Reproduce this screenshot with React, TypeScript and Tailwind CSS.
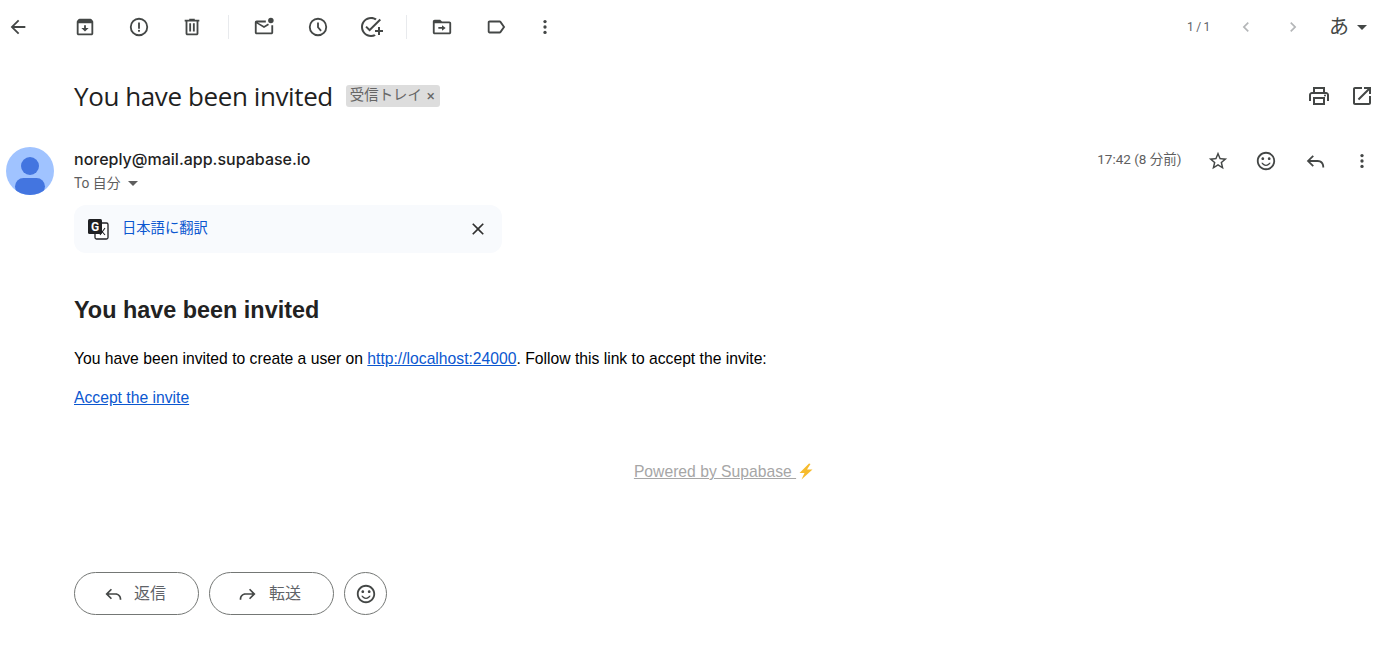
import React from 'react'

const Icon = ({ d, size = 24, className = 'text-[#444746]', children }: { d?: string; size?: number; className?: string; children?: React.ReactNode }) => (
  <svg width={size} height={size} viewBox="0 0 24 24" fill="currentColor" className={className}>
    {d && <path d={d} />}
    {children}
  </svg>
)

const paths = {
  back: 'M20 11H7.83l5.59-5.59L12 4l-8 8 8 8 1.41-1.41L7.83 13H20v-2z',
  archive: 'M20.54 5.23l-1.39-1.68C18.88 3.21 18.47 3 18 3H6c-.47 0-.88.21-1.16.55L3.46 5.23C3.17 5.57 3 6.02 3 6.5V19c0 1.1.9 2 2 2h14c1.1 0 2-.9 2-2V6.5c0-.48-.17-.93-.46-1.27zM5 19V8h14v11H5zm8-9h-2v3H8l4 4 4-4h-3z',
  report: 'M12 2a10 10 0 1 0 0 20 10 10 0 0 0 0-20zm0 18a8 8 0 1 1 0-16 8 8 0 0 1 0 16zM11 7h2v7h-2zm1 8a1.2 1.2 0 1 0 0 2.4 1.2 1.2 0 0 0 0-2.4z',
  trash: 'M15 4V3H9v1H4v2h1v13c0 1.1.9 2 2 2h10c1.1 0 2-.9 2-2V6h1V4h-5zm2 15H7V6h10v13zM9 8h2v9H9zm4 0h2v9h-2z',
  unread: 'M14 5H4c-1.1 0-2 .9-2 2v11c0 1.1.9 2 2 2h16c1.1 0 2-.9 2-2v-8h-2v8H4V8.2l8 5 5.4-3.4-1-1.7-4.4 2.8L5.2 7H14z',
  clock: 'M12 2a10 10 0 1 0 0 20 10 10 0 0 0 0-20zm0 18a8 8 0 1 1 0-16 8 8 0 0 1 0 16zM13 7h-2v5.6l3.6 4.3 1.5-1.3-3.1-3.7z',
  task: 'M22 5.18L10.59 16.6l-4.24-4.24 1.41-1.41 2.83 2.83 10-10L22 5.18zM12 20c-4.41 0-8-3.59-8-8s3.59-8 8-8c1.57 0 3.04.46 4.28 1.25l1.45-1.45C16.1 2.67 14.13 2 12 2 6.48 2 2 6.48 2 12s4.48 10 10 10c1.73 0 3.36-.44 4.78-1.22l-1.5-1.5c-1 .46-2.11.72-3.28.72zm7-5h-3v2h3v3h2v-3h3v-2h-3v-3h-2v3z',
  move: 'M20 6h-8l-2-2H4c-1.1 0-2 .9-2 2v12c0 1.1.9 2 2 2h16c1.1 0 2-.9 2-2V8c0-1.1-.9-2-2-2zm0 12H4V8h16v10zm-8-2l4-3-4-3v2H8v2h4z',
  label: 'M17.63 5.84C17.27 5.33 16.67 5 16 5L5 5.01C3.9 5.01 3 5.9 3 7v10c0 1.1.9 1.99 2 1.99L16 19c.67 0 1.27-.33 1.63-.84L22 12l-4.37-6.16zM16 17H5V7h11l3.55 5L16 17z',
  left: 'M15.41 7.41L14 6l-6 6 6 6 1.41-1.41L10.83 12z',
  right: 'M10 6L8.59 7.41 13.17 12l-4.58 4.59L10 18l6-6z',
  print: 'M19 8h-1V3H6v5H5c-1.66 0-3 1.34-3 3v6h4v4h12v-4h4v-6c0-1.66-1.34-3-3-3zM8 5h8v3H8V5zm8 14H8v-4h8v4zm2-2v-4H6v4H4v-6c0-.55.45-1 1-1h14c.55 0 1 .45 1 1v6h-2zm0-6.5a1 1 0 1 0 0 2 1 1 0 0 0 0-2z',
  open: 'M19 19H5V5h7V3H5c-1.11 0-2 .9-2 2v14c0 1.1.89 2 2 2h14c1.1 0 2-.9 2-2v-7h-2v7zM14 3v2h3.59l-9.83 9.83 1.41 1.41L19 6.41V10h2V3h-7z',
  star: 'M22 9.24l-7.19-.62L12 2 9.19 8.63 2 9.24l5.46 4.73L5.82 21 12 17.27 18.18 21l-1.63-7.03L22 9.24zM12 15.4l-3.76 2.27 1-4.28-3.32-2.88 4.38-.38L12 6.1l1.71 4.04 4.38.38-3.32 2.88 1 4.28L12 15.4z',
  smile: 'M11.99 2C6.47 2 2 6.48 2 12s4.47 10 9.99 10C17.52 22 22 17.52 22 12S17.52 2 11.99 2zM12 20c-4.42 0-8-3.58-8-8s3.58-8 8-8 8 3.58 8 8-3.58 8-8 8zm3.5-9c.83 0 1.5-.67 1.5-1.5S16.33 8 15.5 8 14 8.67 14 9.5s.67 1.5 1.5 1.5zm-7 0c.83 0 1.5-.67 1.5-1.5S9.33 8 8.5 8 7 8.67 7 9.5 7.67 11 8.5 11zM12 16c-1.48 0-2.75-.81-3.45-2H6.88c.8 2.05 2.79 3.5 5.12 3.5s4.32-1.45 5.12-3.5h-1.67c-.7 1.19-1.97 2-3.45 2z',
  close: 'M19 6.41L17.59 5 12 10.59 6.41 5 5 6.41 10.59 12 5 17.59 6.41 19 12 13.41 17.59 19 19 17.59 13.41 12z',
  reply: 'M9.4 5.6L3 12l6.4 6.4 1.4-1.4-4-4H15c2.8 0 5 2.2 5 5v1h2v-1c0-3.9-3.1-7-7-7H6.8l4-4z',
  forward: 'M14.6 5.6L21 12l-6.4 6.4-1.4-1.4 4-4H9c-2.8 0-5 2.2-5 5v1H2v-1c0-3.9 3.1-7 7-7h8.2l-4-4z',
}

const Dots = ({ size = 24 }: { size?: number }) => (
  <Icon size={size}>
    <circle cx="12" cy="5.5" r="2" />
    <circle cx="12" cy="12" r="2" />
    <circle cx="12" cy="18.5" r="2" />
  </Icon>
)

const ToolBtn = ({ children }: { children: React.ReactNode }) => (
  <div className="w-[53.5px] h-10 flex items-center justify-center">{children}</div>
)

const Caret = ({ className = 'border-t-[#444746]' }: { className?: string }) => (
  <span className={`block w-0 h-0 border-x-[5px] border-x-transparent border-t-[5px] ${className}`} />
)

const TranslateIcon = () => (
  <svg width="24" height="24" viewBox="0 0 24 24">
    <rect x="9" y="6" width="13" height="16" rx="1.5" fill="#fff" stroke="#202124" strokeWidth="1.3" />
    <path d="M13 11l6 7M19 11l-5 7" stroke="#202124" strokeWidth="1.1" fill="none" />
    <rect x="2" y="2" width="14" height="15" rx="1.5" fill="#202124" />
    <text x="9" y="14" textAnchor="middle" fontSize="12" fontWeight="700" fill="#fff" fontFamily="Roboto, sans-serif">G</text>
  </svg>
)

const PillBtn = ({ d, label }: { d: string; label: string }) => (
  <button className="w-[125px] h-[43px] rounded-full border border-[#747775] flex items-center justify-center gap-[11px] text-[#5f6368] text-base pr-1">
    <Icon d={d} size={20} />
    <span>{label}</span>
  </button>
)

export default function App() {
  return (
    <div className="w-[1400px] h-[669px] bg-white overflow-hidden antialiased text-[#202124] font-['Roboto','Noto_Sans_CJK_JP',sans-serif]">
      <div className="h-[54px] flex items-center">
        <div className="w-9 flex justify-center">
          <Icon d={paths.back} size={22} />
        </div>
        <div className="ml-[22.5px] flex items-center">
          <ToolBtn><Icon d={paths.archive} size={22} /></ToolBtn>
          <ToolBtn><Icon d={paths.report} size={22} /></ToolBtn>
          <ToolBtn><Icon d={paths.trash} size={22} /></ToolBtn>
          <div className="w-px h-6 bg-[#e8eaed] ml-[8.5px] mr-[9px]" />
          <ToolBtn>
            <Icon d={paths.unread} size={22}><circle cx="19.5" cy="5" r="3" /></Icon>
          </ToolBtn>
          <ToolBtn><Icon d={paths.clock} size={22} /></ToolBtn>
          <ToolBtn><Icon d={paths.task} size={24} /></ToolBtn>
          <div className="w-px h-6 bg-[#e8eaed] ml-[7.5px] mr-[9px]" />
          <ToolBtn><Icon d={paths.move} size={22} /></ToolBtn>
          <ToolBtn><Icon d={paths.label} size={22} /></ToolBtn>
          <div className="w-[44px] flex justify-center"><Dots size={20} /></div>
        </div>
        <div className="ml-auto flex items-center pr-[33px]">
          <span className="text-xs tracking-[-0.3px] text-[#5f6368]">1 / 1</span>
          <div className="ml-[24px] w-6 flex justify-center"><Icon d={paths.left} size={20} className="text-[#b4b6b8]" /></div>
          <div className="ml-[23px] w-6 flex justify-center"><Icon d={paths.right} size={20} className="text-[#b4b6b8]" /></div>
          <span className="ml-[24px] text-[20px] text-[#444746]">あ</span>
          <span className="ml-[8px]"><Caret /></span>
        </div>
      </div>

      <div className="h-[84px] pl-[74px] pr-[26px] flex items-center">
        <h1 className="text-[26px] leading-9 text-[#1f1f1f] font-['Open_Sans',sans-serif] tracking-[-0.4px]">You have been invited</h1>
        <span className="ml-[13px] h-[22px] pl-[4px] pr-[5px] rounded-[3px] bg-[#dddddd] flex items-center text-[14.4px] text-[#666666] gap-[5px]">
          受信トレイ
          <span className="text-[15px] leading-none">×</span>
        </span>
        <div className="ml-auto flex items-center gap-[19px]">
          <Icon d={paths.print} size={24} />
          <Icon d={paths.open} size={24} />
        </div>
      </div>

      <div className="pl-[6px] pr-[28px] flex items-start">
        <div className="mt-[9px] w-12 h-12 rounded-full bg-[#a0c3ff] overflow-hidden flex flex-col items-center shrink-0">
          <div className="mt-[10px] w-[18px] h-[18px] rounded-full bg-[#4375e0]" />
          <div className="mt-[3px] w-[30px] h-[18px] rounded-full bg-[#4375e0]" />
        </div>
        <div className="ml-5">
          <div className="mt-[11px] text-base leading-5 font-medium text-[#1f1f1f] font-['Inter',sans-serif]">noreply@mail.app.supabase.io</div>
          <div className="mt-[6px] flex items-center text-[13.8px] leading-4 text-[#5e5e5e]">
            <span>To 自分</span>
            <span className="ml-[8px]"><Caret className="border-t-[#5e5e5e]" /></span>
          </div>
        </div>
        <div className="ml-auto mt-[11px] flex items-center">
          <span className="mb-[3px] text-[13.5px] text-[#5e5e5e]">17:42 (8 分前)</span>
          <div className="ml-[25px] flex items-center gap-[26.5px]">
            <Icon d={paths.star} size={22} />
            <Icon d={paths.smile} size={22} />
            <Icon d={paths.reply} size={22} />
            <Dots size={20} />
          </div>
        </div>
      </div>

      <div className="mt-[10px] ml-[74px] w-[428px] h-12 rounded-xl bg-[#f8fafd] flex items-center pl-[12px] pr-[14px]">
        <TranslateIcon />
        <span className="ml-[12px] text-[14.3px] text-[#0b57d0]">日本語に翻訳</span>
        <div className="ml-auto"><Icon d={paths.close} size={20} className="text-[#303030]" /></div>
      </div>

      <div className="mt-[43px] pl-[74px] pr-[26px] font-['Liberation_Sans',Arial,sans-serif] text-black">
        <h2 className="text-[23.4px] leading-7 font-bold text-[#222222]">You have been invited</h2>
        <p className="mt-[26px] text-[15.7px] leading-[17px]">
          You have been invited to create a user on <a className="text-[#0b57d0] underline">http://localhost:24000</a>. Follow this link to accept the invite:
        </p>
        <p className="mt-[22px] text-[15.7px] leading-[17px]">
          <a className="text-[#0b57d0] underline">Accept the invite</a>
        </p>
        <div className="mt-[57px] flex justify-center items-center text-[15.7px] leading-[17px] text-[#a6a6a6]">
          <a className="underline whitespace-pre">Powered by Supabase </a>
          <svg width="16" height="17" viewBox="0 0 16 17" className="ml-[2px]">
            <path d="M11 0.5L1.5 10h5L3.5 16.5 14.5 6.5H9L12.5 1z" fill="#f6bb2d" />
          </svg>
        </div>
      </div>

      <div className="mt-[92px] pl-[74px] flex items-center gap-[10px]">
        <PillBtn d={paths.reply} label="返信" />
        <PillBtn d={paths.forward} label="転送" />
        <div className="w-[43px] h-[43px] rounded-full border border-[#747775] flex items-center justify-center">
          <Icon d={paths.smile} size={22} />
        </div>
      </div>
    </div>
  )
}
